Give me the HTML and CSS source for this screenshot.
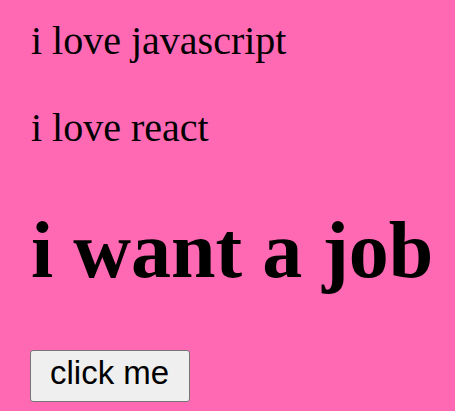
FILE: index.html
```html
<!DOCTYPE html>
<html>
<head>
<meta charset="utf-8">
<link rel="stylesheet" href="styles.css">
</head>
<body class="page">
  <main class="content">
    <p class="line first">i love javascript</p>
    <p class="line">i love react</p>
    <h1 class="title">i want a job</h1>
    <button class="btn">click me</button>
  </main>
</body>
</html>
```
FILE: styles.css
```css
html, body {
  margin: 0;
  background: #ff69b4;
}
.page {
  font-family: "Liberation Serif", "Times New Roman", serif;
  font-size: 40px;
  color: #000;
}
.content {
  padding: 17px 0 0 31px;
}
.line {
  margin: 40px 0;
}
.line.first {
  margin-top: 0;
}
.title {
  font-size: 80px;
  font-weight: bold;
  margin: 53.6px 0 54.6px;
}
.btn {
  display: block;
  font-family: "Liberation Sans", Arial, sans-serif;
  font-size: 33px;
  line-height: 38px;
  color: #000;
  background: #efefef;
  border: 1px solid #767676;
  border-radius: 3px;
  padding: 3px 20px 9px 19px;
  margin: 0 0 0 -1px;
}
```
